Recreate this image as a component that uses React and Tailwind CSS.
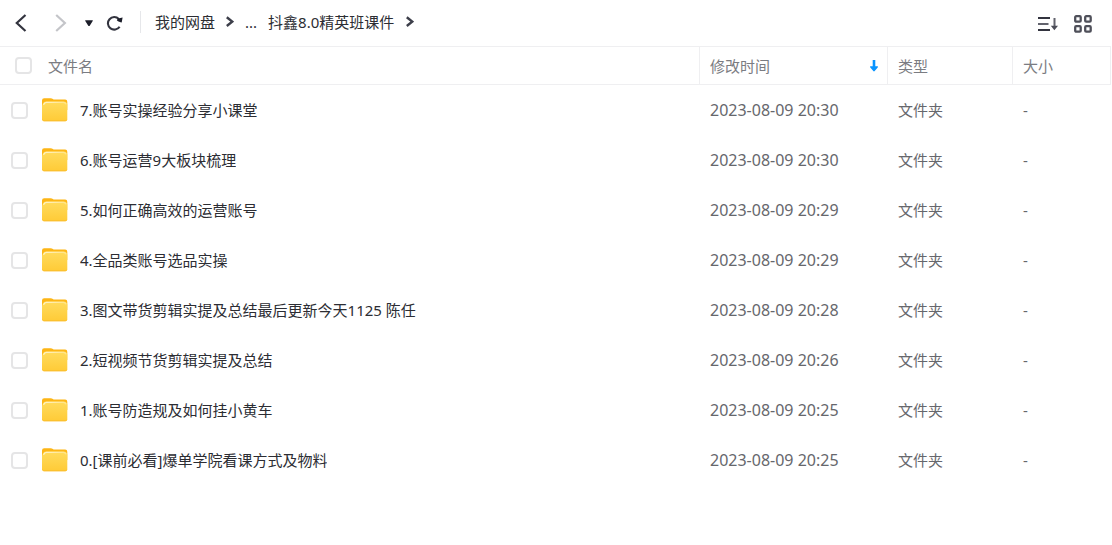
import React, { useState } from 'react';

const folders = [
  { id: 7, name: '7.账号实操经验分享小课堂', modified: '2023-08-09 20:30' },
  { id: 6, name: '6.账号运营9大板块梳理', modified: '2023-08-09 20:30' },
  { id: 5, name: '5.如何正确高效的运营账号', modified: '2023-08-09 20:29' },
  { id: 4, name: '4.全品类账号选品实操', modified: '2023-08-09 20:29' },
  { id: 3, name: '3.图文带货剪辑实提及总结最后更新今天1125 陈任', modified: '2023-08-09 20:28' },
  { id: 2, name: '2.短视频节货剪辑实提及总结', modified: '2023-08-09 20:26' },
  { id: 1, name: '1.账号防造规及如何挂小黄车', modified: '2023-08-09 20:25' },
  { id: 0, name: '0.[课前必看]爆单学院看课方式及物料', modified: '2023-08-09 20:25' },
];

const FolderIcon = () => (
  <svg className="w-[26px] h-6 shrink-0" viewBox="0 0 26 24" fill="none" aria-hidden="true">
    <defs>
      <linearGradient id="folderFront" x1="0" y1="4" x2="0" y2="24" gradientUnits="userSpaceOnUse">
        <stop stopColor="#ffdb5c" />
        <stop offset="1" stopColor="#ffca35" />
      </linearGradient>
      <linearGradient id="folderShine" x1="3" y1="0" x2="23" y2="0" gradientUnits="userSpaceOnUse">
        <stop stopColor="#fff3c4" />
        <stop offset="1" stopColor="#ffe48a" />
      </linearGradient>
    </defs>
    <path d="M0 2.400A2.200 2.200 0 0 1 2.200.2h6.400c1 0 1.600.3 2.300.9l.7.500h11.500a2.200 2.200 0 0 1 2.200 2.200V12H0z" fill="#fdb515" />
    <path d="M0 7.500C1 5 2 3.600 4 3.600h17.800c2 0 2.900 1 3.500 3v14.600a2 2 0 0 1-2 2H2a2 2 0 0 1-2-2z" fill="url(#folderFront)" />
    <path d="M1.500 6.800C2.200 5 3 4.300 4.500 4.300h17c1.400 0 2.100.7 2.600 1.900" stroke="url(#folderShine)" strokeWidth="1.300" />
    <path d="M.6 22c.4.600 1 .8 1.600.8h20.900c.7 0 1.300-.2 1.700-.8" stroke="#f9b928" strokeWidth=".7" />
  </svg>
);

const CrumbArrow = () => (
  <svg className="w-2 h-3 shrink-0" viewBox="0 0 8 12" fill="none" stroke="#3d3f4a" strokeWidth="2.400" aria-hidden="true">
    <path d="M.8 1.200 6.200 5.600.8 10" />
  </svg>
);

const Checkbox = (props) => (
  <input
    type="checkbox"
    className="block shrink-0 appearance-none w-[17px] h-[17px] rounded border-2 border-[#e5e5e6] bg-white checked:bg-[#06a7ff] checked:border-[#06a7ff] cursor-pointer"
    {...props}
  />
);

const App = () => {
  const [selected, setSelected] = useState([]);

  const toggle = (id) => {
    setSelected(selected.includes(id) ? selected.filter((item) => item !== id) : [...selected, id]);
  };

  const toggleAll = () => {
    setSelected(selected.length === folders.length ? [] : folders.map((folder) => folder.id));
  };

  return (
    <div className="min-h-screen bg-white text-[15px] leading-5 text-[#2c2d33] font-['Noto_Sans','Noto_Sans_CJK_SC',sans-serif]">
      {/* Toolbar */}
      <header className="flex items-center h-[46px] pl-[15px] pr-5">
        <div className="flex items-center pb-px">
          <button type="button" aria-label="后退" className="cursor-pointer">
            <svg className="w-3 h-[18px]" viewBox="0 0 12 18" fill="none" stroke="#33343f" strokeWidth="2.200">
              <path d="M10.500 1 1.800 9l8.700 8" />
            </svg>
          </button>
          <button type="button" aria-label="前进" className="ml-7">
            <svg className="w-3 h-[18px]" viewBox="0 0 12 18" fill="none" stroke="#c4c5c9" strokeWidth="2.200">
              <path d="m1.200 1 8.700 8-8.700 8" />
            </svg>
          </button>
          <button type="button" aria-label="历史记录" className="ml-[17px] cursor-pointer">
            <svg className="w-[10px] h-2" viewBox="0 0 10 8" fill="#1c1e2a">
              <path d="M1.700 1.200h6.600c.5 0 .7.500.4.900L5.900 6.400c-.5.700-1.300.7-1.800 0L1.300 2.100c-.3-.4-.1-.9.400-.9z" />
            </svg>
          </button>
          <button type="button" aria-label="刷新" className="ml-3 cursor-pointer">
            <svg className="w-[18px] h-4" viewBox="0 0 18 16" fill="none">
              <path d="M13.600 11.700A6.300 6.300 0 1 1 12.800 4" stroke="#33343f" strokeWidth="2.100" />
              <path d="M10.800 5.200 12 3.600l4.600-1.200-.9 5.100c-1.600-.2-3.400-1-4.900-2.300z" fill="#1c1e2a" />
            </svg>
          </button>
        </div>

        <nav aria-label="路径" className="flex items-center min-w-0 ml-4 pb-0.5">
          <span className="w-px h-[22px] bg-[#e6e7ea]" />
          <a href="#root" className="ml-[14px] whitespace-nowrap">我的网盘</a>
          <span className="ml-[11px]"><CrumbArrow /></span>
          <a href="#parent" className="ml-[11px]">...</a>
          <a href="#current" className="ml-[11px] whitespace-nowrap">抖鑫8.0精英班课件</a>
          <span className="ml-3"><CrumbArrow /></span>
        </nav>

        <div className="flex items-center gap-4 ml-auto pt-0.5">
          <button type="button" aria-label="排序" className="cursor-pointer">
            <svg className="w-5 h-[18px]" viewBox="0 0 20 18" fill="none" stroke="#33343f" strokeWidth="2">
              <path d="M0 3h12M0 15h12" />
              <path d="M0 9h10.500M16.500 3v9" stroke="#62636d" />
              <path d="M12.800 10.800h7.200l-3.600 4.400z" fill="#4b4c57" stroke="none" />
            </svg>
          </button>
          <button type="button" aria-label="网格视图" className="cursor-pointer">
            <svg className="w-[18px] h-[18px]" viewBox="0 0 18 18" fill="none" stroke="#4f505a" strokeWidth="2.300">
              <rect x="1.200" y="1.200" width="5.500" height="5.500" rx="1" />
              <rect x="11.200" y="1.200" width="5.500" height="5.500" rx="1" />
              <rect x="1.200" y="11.200" width="5.500" height="5.500" rx="1" />
              <rect x="11.200" y="11.200" width="5.500" height="5.500" rx="1" />
            </svg>
          </button>
        </div>
      </header>

      {/* File list */}
      <main className="pr-px">
        <table className="w-full table-fixed border-separate border-spacing-0 text-left">
          <colgroup>
            <col />
            <col className="w-[188px]" />
            <col className="w-[125px]" />
            <col className="w-[99px]" />
          </colgroup>
          <thead className="text-[#7b7c82]">
            <tr className="h-[39px]">
              <th className="border-y border-[#efeff1] p-0 pl-[15px] font-normal">
                <div className="flex items-center gap-4">
                  <Checkbox
                    aria-label="全选"
                    checked={selected.length === folders.length}
                    onChange={toggleAll}
                  />
                  <span>文件名</span>
                </div>
              </th>
              <th className="border-y border-l border-[#efeff1] p-0 pl-[10px] pr-2 font-normal">
                <button type="button" className="flex w-full items-center justify-between cursor-pointer">
                  <span>修改时间</span>
                  <svg className="w-[10px] h-3" viewBox="0 0 10 12" fill="#0a94ff" aria-hidden="true">
                    <path d="M3.700 0h2.600v6.200h1.800c.8 0 1.100.6.600 1.200L5.700 11c-.4.500-1 .5-1.400 0L1.300 7.400C.8 6.800 1.100 6.200 1.900 6.200h1.800z" />
                  </svg>
                </button>
              </th>
              <th className="border-y border-l border-[#efeff1] p-0 pl-[10px] font-normal">类型</th>
              <th className="border border-[#efeff1] p-0 pl-[10px] font-normal">大小</th>
            </tr>
          </thead>
          <tbody className="text-[#66676c]">
            {folders.map((folder) => (
              <tr key={folder.id} className="h-[50px] hover:bg-[#f7f9fc]">
                <td className="p-0 pl-[11px]">
                  <div className="flex items-center">
                    <Checkbox
                      id={`folder-${folder.id}`}
                      checked={selected.includes(folder.id)}
                      onChange={() => toggle(folder.id)}
                    />
                    <label htmlFor={`folder-${folder.id}`} className="flex min-w-0 items-center gap-3 pl-[14px] text-[#2c2d33]">
                      <FolderIcon />
                      <span className="truncate">{folder.name}</span>
                    </label>
                  </div>
                </td>
                <td className="p-0 pl-[11px] text-base leading-5 whitespace-nowrap">{folder.modified}</td>
                <td className="p-0 pl-[11px]">文件夹</td>
                <td className="p-0 pl-[11px]">-</td>
              </tr>
            ))}
          </tbody>
        </table>
      </main>
    </div>
  );
};

export default App;
